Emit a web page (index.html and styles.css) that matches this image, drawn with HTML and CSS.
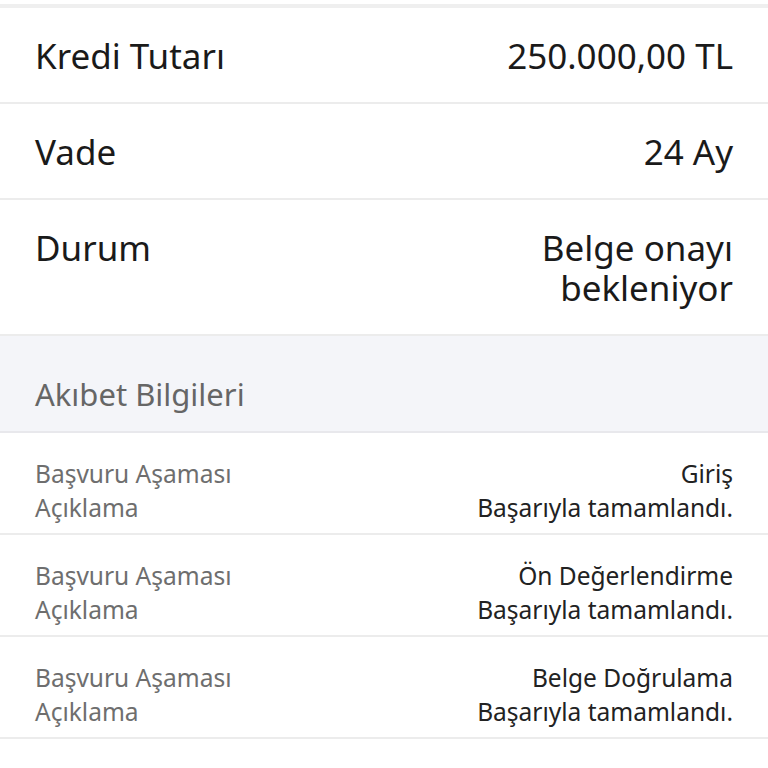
FILE: index.html
```html
<!DOCTYPE html>
<html lang="tr">
<head>
  <meta charset="UTF-8" />
  <title>Kredi Başvurusu</title>
  <link rel="stylesheet" href="styles.css">
</head>
<body>
  <div class="sheet">
    <div class="row">
      <span class="label">Kredi Tutarı</span>
      <span class="value">250.000,00 TL</span>
    </div>
    <div class="row">
      <span class="label">Vade</span>
      <span class="value">24 Ay</span>
    </div>
    <div class="row">
      <span class="label">Durum</span>
      <span class="value">Belge onayı<br>bekleniyor</span>
    </div>

    <div class="section-title">Akıbet Bilgileri</div>

    <div class="step">
      <div class="step-labels">
        <span>Başvuru Aşaması</span>
        <span>Açıklama</span>
      </div>
      <div class="step-values">
        <span>Giriş</span>
        <span>Başarıyla tamamlandı.</span>
      </div>
    </div>
    <div class="step">
      <div class="step-labels">
        <span>Başvuru Aşaması</span>
        <span>Açıklama</span>
      </div>
      <div class="step-values">
        <span>Ön Değerlendirme</span>
        <span>Başarıyla tamamlandı.</span>
      </div>
    </div>
    <div class="step">
      <div class="step-labels">
        <span>Başvuru Aşaması</span>
        <span>Açıklama</span>
      </div>
      <div class="step-values">
        <span>Belge Doğrulama</span>
        <span>Başarıyla tamamlandı.</span>
      </div>
    </div>
  </div>
</body>
</html>
```

FILE: styles.css
```css
body {
  margin: 0;
  background: #fff;
  font-family: "Noto Sans", Roboto, sans-serif;
  color: #1a1a1a;
}

.sheet {
  margin-top: 4px;
  border-top: 4px solid #efefef;
}

.row {
  display: flex;
  justify-content: space-between;
  align-items: flex-start;
  padding: 28px 35px 26px;
  font-size: 35px;
  line-height: 40px;
  border-bottom: 2px solid #ececec;
}

.value {
  text-align: right;
}

.section-title {
  background: #f4f5f9;
  color: #666;
  font-size: 31px;
  line-height: 40px;
  padding: 38px 35px 17px;
  border-bottom: 2px solid #e8e8ec;
}

.step {
  display: flex;
  justify-content: space-between;
  padding: 24px 35px 8px;
  height: 68px;
  font-size: 24.5px;
  line-height: 34px;
  border-bottom: 2px solid #ececec;
}

.step-labels,
.step-values {
  display: flex;
  flex-direction: column;
}

.step-labels {
  color: #6e6e6e;
}

.step-values {
  align-items: flex-end;
  color: #222;
}
```
